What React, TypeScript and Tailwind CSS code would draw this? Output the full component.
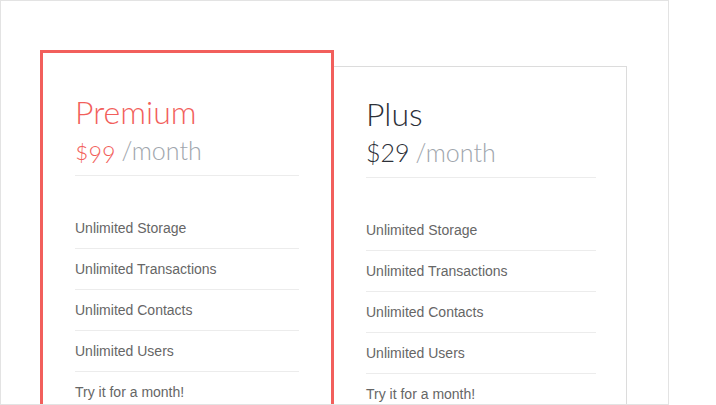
import React from "react";

const features = [
  "Unlimited Storage",
  "Unlimited Transactions",
  "Unlimited Contacts",
  "Unlimited Users",
  "Try it for a month!",
];

function FeatureList() {
  return (
    <ul className="mt-8 font-['Liberation_Sans',Arial,sans-serif] text-[14px] leading-[20px] text-[#666]">
      {features.map((f, i) => (
        <li key={f} className={`py-[10px] ${i < features.length - 1 ? "border-b border-[#ececec]" : ""}`}>
          {f}
        </li>
      ))}
    </ul>
  );
}

export default function App() {
  return (
    <div className="w-[716px] h-[405px] bg-white">
      <div className="w-[669px] h-[405px] border border-[#e3e3e3] overflow-hidden pl-[39px] pt-[49px] flex items-start">
        <div className="relative z-10 w-[294px] h-[420px] shrink-0 border-[3px] border-[#f25f5c] bg-white px-8 pt-[40px]">
          <div className="font-['Lato',sans-serif] font-light border-b border-[#ececec] pb-[8px]">
            <div className="text-[32px] leading-[38px] text-[#f25f5c]">Premium</div>
            <div className="text-[25px] leading-[34px] mt-[2px] [font-variant-numeric:oldstyle-nums]">
              <span className="text-[#f25f5c]">$99</span>
              <span className="text-[#a0a6ad] ml-[6px]">/month</span>
            </div>
          </div>
          <FeatureList />
        </div>
        <div className="w-[294px] h-[420px] shrink-0 -ml-px mt-[16px] border border-[#dcdcdc] bg-white pl-[32px] pr-[30px] pt-[28px]">
          <div className="font-['Lato',sans-serif] font-light border-b border-[#ececec] pb-[8px]">
            <div className="text-[32px] leading-[38px] text-[#2c3038]">Plus</div>
            <div className="text-[25px] leading-[34px] mt-[2px]">
              <span className="text-[#2c3038]">$29</span>
              <span className="text-[#a0a6ad] ml-[6px]">/month</span>
            </div>
          </div>
          <FeatureList />
        </div>
      </div>
    </div>
  );
}
